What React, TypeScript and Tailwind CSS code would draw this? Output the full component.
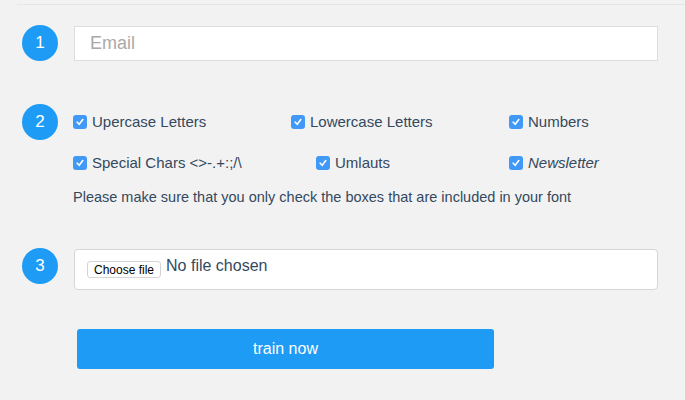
export default function App() {
  const row1 = [
    { label: 'Upercase Letters', w: 'w-[218px]' },
    { label: 'Lowercase Letters', w: 'w-[218px]' },
    { label: 'Numbers', w: '' },
  ]
  const row2 = [
    { label: 'Special Chars <>-.+:;/\\', w: 'w-[243px]' },
    { label: 'Umlauts', w: 'w-[193px]' },
    { label: 'Newsletter', w: '', italic: true },
  ]

  const Step = ({ n }: { n: number }) => (
    <div className="w-9 h-9 shrink-0 rounded-full bg-[#1e9bf5] text-white flex items-center justify-center text-[17px]">
      {n}
    </div>
  )

  const Check = ({ label, w, italic }: { label: string; w: string; italic?: boolean }) => (
    <label className={`flex items-center gap-[5px] ${w}`}>
      <span className="w-[14px] h-[14px] rounded-[3px] bg-[#4199f7] flex items-center justify-center">
        <svg width="10" height="10" viewBox="0 0 10 10" fill="none">
          <path d="M2.2 5.2 L4.2 7.3 L7.8 2.6" stroke="white" strokeWidth="1.6" strokeLinecap="round" strokeLinejoin="round" />
        </svg>
      </span>
      <span className={italic ? 'italic' : ''}>{label}</span>
    </label>
  )

  return (
    <div className="min-h-screen bg-[#f2f2f2] font-['Liberation_Sans',Arial,sans-serif] text-[#34495e]">
      <div className="ml-[17px] pt-[4px]">
        <div className="border-t border-[#e6e6e6]" />
      </div>

      {/* step 1 */}
      <div className="mt-[20px] flex items-center gap-4 pl-[22px] pr-[27px]">
        <Step n={1} />
        <input
          placeholder="Email"
          className="flex-1 h-[35px] bg-white border border-[#dddddd] px-[15px] text-[18px] placeholder:text-[#a9a9a9] outline-none"
        />
      </div>

      {/* step 2 */}
      <div className="mt-[43px] flex items-start gap-[15px] pl-[22px]">
        <Step n={2} />
        <div className="text-[15px]">
          <div className="h-9 flex items-center">
            {row1.map((c) => (
              <Check key={c.label} {...c} />
            ))}
          </div>
          <div className="mt-[5px] h-9 flex items-center">
            {row2.map((c) => (
              <Check key={c.label} {...c} />
            ))}
          </div>
          <p className="mt-[6px] leading-5 text-[14.5px]">
            Please make sure that you only check the boxes that are included in your font
          </p>
        </div>
      </div>

      {/* step 3 */}
      <div className="mt-[41px] flex items-start gap-4 pl-[22px] pr-[27px]">
        <Step n={3} />
        <div className="flex-1 mt-[1px] h-[41px] bg-white border border-[#d6d6d6] rounded-[4px] flex items-start gap-[5px] pl-[12px] pt-[7px]">
          <button className="mt-[4px] h-[17px] px-[6px] text-[12px] leading-none text-black bg-white border border-[#d4d4d4] rounded-[3px]">
            Choose file
          </button>
          <span className="text-[16px] leading-[18px]">No file chosen</span>
        </div>
      </div>

      <button className="mt-[39px] ml-[77px] w-[417px] h-[40px] rounded-[3px] bg-[#1e9bf5] text-white text-[16px]">
        train now
      </button>
    </div>
  )
}
